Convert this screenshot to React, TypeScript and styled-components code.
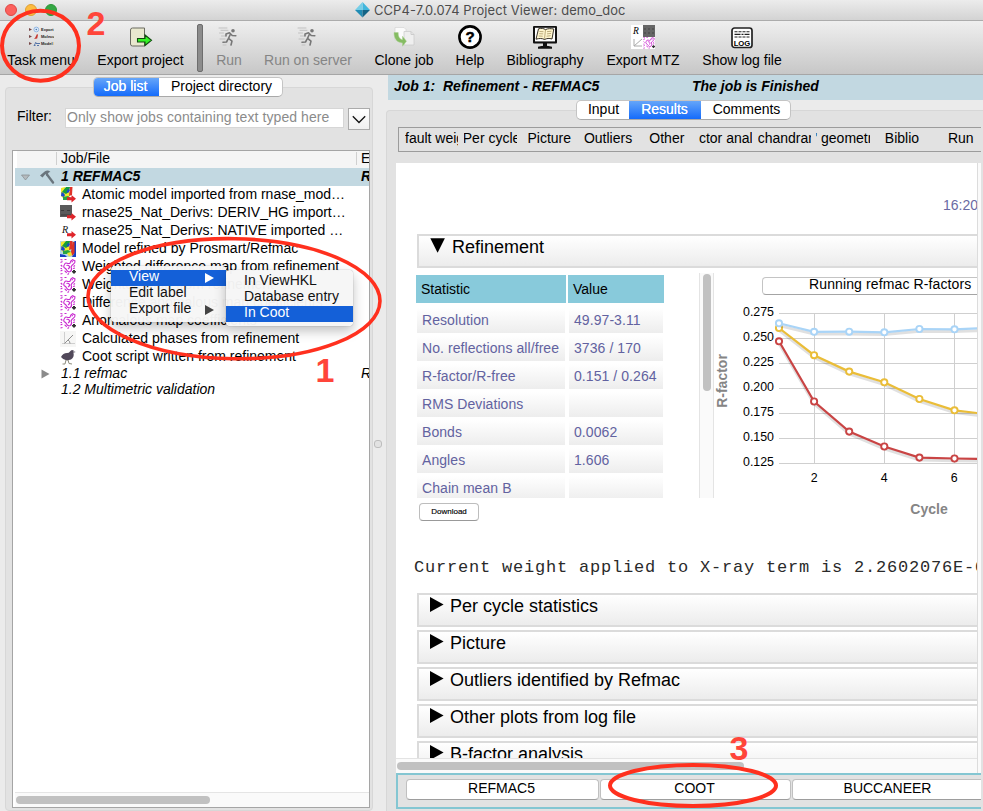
import React from "react";
import styled, { createGlobalStyle, css } from "styled-components";

const Global = createGlobalStyle`
  * { box-sizing: border-box; }
  html, body { margin: 0; padding: 0; overflow: hidden; }
  body { font-family: "Liberation Sans", Arial, sans-serif; font-size: 14px; color: #000; }
`;

const Window = styled.div`
  position: relative;
  width: 983px;
  height: 811px;
  overflow: hidden;
  display: flex;
  flex-direction: column;
  background: #ebebeb;
  white-space: nowrap;
`;

/* ---------- title bar and toolbar ---------- */

const TitleBar = styled.div`
  height: 21px;
  flex: none;
  display: flex;
  align-items: center;
  background: linear-gradient(#ececec, #d3d3d3);
  border-bottom: 1px solid #acacac;
  color: #4c4c4c;
`;

const Lights = styled.div`
  width: 355px;
  padding-left: 5px;
  display: flex;
  gap: 8px;
`;

const Light = styled.span<{ $color: string; $ring: string }>`
  width: 12px;
  height: 12px;
  border-radius: 50%;
  background: ${(p) => p.$color};
  border: 1px solid ${(p) => p.$ring};
`;

const Title = styled.span`
  font-family: "Inter", "Liberation Sans", sans-serif;
  font-size: 12.9px;
  letter-spacing: 0.13px;
  margin-left: 4px;
`;

const Toolbar = styled.div`
  height: 54px;
  flex: none;
  display: flex;
  gap: 22px;
  padding: 4px 0 0 7px;
  background: linear-gradient(#efefef, #c7c7c7);
  border-bottom: 1px solid #a6a6a6;
`;

const Tool = styled.div<{ $w: number; $off?: boolean }>`
  width: ${(p) => p.$w}px;
  display: flex;
  flex-direction: column;
  align-items: center;
  color: ${(p) => (p.$off ? "#858585" : "#000")};
  svg { flex: none; display: block; }
`;

const ToolLabel = styled.span`
  line-height: 16px;
  margin-top: 3px;
`;

const ToolDivider = styled.div`
  width: 6px;
  height: 48px;
  margin: -1px -9px 0;
  border-radius: 2px;
  background: #8c8c8c;
  border: 1px solid #6d6d6d;
`;

/* ---------- shared controls ---------- */

const Segments = styled.div<{ $left: number }>`
  position: relative;
  z-index: 1;
  height: 20px;
  width: max-content;
  margin-left: ${(p) => p.$left}px;
  display: flex;
  border-radius: 5px;
  overflow: hidden;
  background: #fff;
  border: 1px solid #c4c4c4;
  border-bottom-color: #a9a9a9;
`;

const Segment = styled.div<{ $w: number; $on?: boolean; $nudge?: number }>`
  width: ${(p) => p.$w}px;
  margin: -1px 0;
  line-height: 19px;
  text-align: center;
  padding-left: ${(p) => (p.$nudge ?? 0) * 2}px;
  ${(p) => p.$on && css`
    margin-left: -1px;
    padding-right: 1px;
    color: #fff;
    background: linear-gradient(#6aa9f9, #1068fb);
    text-shadow: 0 0 0.5px #fff;
  `}
`;

const Thumb = styled.div<{ $w: number; $h: number }>`
  width: ${(p) => p.$w}px;
  height: ${(p) => p.$h}px;
  border-radius: 4px;
  background: #c1c1c1;
`;

/* ---------- left side ---------- */

const Main = styled.div`
  flex: 1;
  min-height: 0;
  display: flex;
`;

const LeftSide = styled.div`
  width: 373px;
  flex: none;
  padding: 2px 0 0 5px;
`;

const LeftGroup = styled.div`
  margin-top: -10px;
  height: 724px;
  padding: 20px 2px 0 6px;
  background: #e2e2e2;
  border: 1px solid #d7d7d7;
  border-radius: 4px;
`;

const FilterRow = styled.div`
  height: 22px;
  display: flex;
  padding-left: 5px;
`;

const FilterLabel = styled.span`
  width: 48px;
  line-height: 17px;
`;

const FilterInput = styled.div`
  width: 279px;
  height: 20px;
  line-height: 17px;
  padding-left: 1px;
  background: #fff;
  border: 1px solid #d6d6d6;
  color: #8b8b8b;
  overflow: hidden;
  letter-spacing: 0.08px;
`;

const DropButton = styled.div`
  width: 22px;
  height: 22px;
  margin-left: 4px;
  background: linear-gradient(#fff, #f0f0f0);
  border: 1px solid #ababab;
  display: flex;
  align-items: center;
  justify-content: center;
`;

const Tree = styled.div`
  margin-top: 20px;
  width: 358px;
  height: 658px;
  border: 1px solid #a5a5a5;
  background: #fff;
  padding-left: 2px;
  display: flex;
  flex-direction: column;
  overflow: hidden;
`;

const TreeHead = styled.div`
  height: 17px;
  margin-left: 2px;
  flex: none;
  display: flex;
  background: #f5f5f5;
  line-height: 15px;
`;

const HeadCell = styled.div<{ $w: number }>`
  width: ${(p) => p.$w}px;
  padding-left: 4px;
  height: 13px;
  margin-top: 1px;
  line-height: 13px;
  border-right: 1px solid #d0d0d0;
  flex: none;
`;

const TreeRow = styled.div<{ $indent: number; $h?: number; $selected?: boolean; $italic?: boolean }>`
  height: ${(p) => p.$h ?? 18}px;
  line-height: ${(p) => (p.$h ?? 18) - 2}px;
  flex: none;
  display: flex;
  align-items: center;
  padding-left: ${(p) => p.$indent}px;
  font-style: ${(p) => (p.$italic || p.$selected ? "italic" : "normal")};
  font-weight: ${(p) => (p.$selected ? "bold" : "normal")};
  background: ${(p) => (p.$selected ? "#c2d8e1" : "#fff")};
`;

const RowIcon = styled.span<{ $w: number }>`
  width: ${(p) => p.$w}px;
  flex: none;
  display: flex;
  align-items: center;
`;

const RowText = styled.span<{ $w?: number }>`
  margin-top: -2px;
  ${(p) => p.$w && css`width: ${p.$w}px; flex: none;`}
`;

const TreeScroll = styled.div`
  margin-top: auto;
  height: 15px;
  flex: none;
  padding: 3px 0 0 1px;
  background: #fafafa;
  border-top: 1px solid #e5e5e5;
`;

const Splitter = styled.div`
  width: 13px;
  flex: none;
  display: flex;
  align-items: center;
  padding: 2px 0 0 1px;
`;

const Grip = styled.span`
  width: 8px;
  height: 8px;
  border: 1px solid #bdbdbd;
  border-radius: 3px;
  background: #e2e2e2;
`;

/* ---------- right side ---------- */

const RightSide = styled.div`
  flex: 1;
  min-width: 0;
  display: flex;
  flex-direction: column;
`;

const JobBar = styled.div`
  height: 25px;
  flex: none;
  margin-left: 2px;
  padding-left: 6px;
  display: flex;
  background: #c2d8e1;
  font-weight: bold;
  font-style: italic;
  line-height: 23px;
  white-space: pre;
`;

const JobTitle = styled.span`
  width: 298px;
`;

const RightGroup = styled.div`
  flex: 1;
  min-height: 0;
  margin-top: -10px;
  padding: 16px 0 0 9px;
  background: #e2e2e2;
  border: 1px solid #d7d7d7;
  border-width: 1px 0 0 1px;
  border-radius: 4px 0 0 0;
`;

const LinkBar = styled.div`
  height: 25px;
  margin-left: 2px;
  padding-left: 6px;
  display: flex;
  gap: 5.4px;
  border: 1px solid #9c9c9c;
  border-right: 0;
  width: 583px;
  overflow: hidden;
`;

const Link = styled.span<{ $left?: boolean; $shift?: number }>`
  width: 53.4px;
  flex: none;
  overflow: hidden;
  line-height: 21px;
  text-indent: ${(p) => p.$shift ?? 0}px;
  text-align: ${(p) => (p.$left ? "left" : "center")};
`;

const Report = styled.div`
  margin-top: 11px;
  height: 610px;
  width: 585px;
  display: grid;
  grid-template-columns: 581px 4px;
  grid-template-rows: 595px 15px;
  background: #fafafa;
`;

const Page = styled.div`
  background: #fff;
  overflow: hidden;
`;

const VTrack = styled.div`
  border-left: 1px solid #dcdcdc;
`;

const HTrack = styled.div`
  border-top: 1px solid #e3e3e3;
  padding: 3px 0 0 1px;
`;

const Clock = styled.div`
  height: 71px;
  padding: 33px 0 0 547px;
  line-height: 18px;
  color: #6a6aa2;
`;

const Fold = styled.div`
  height: 34px;
  margin: 0 0 3px 21px;
  width: 580px;
  display: flex;
  padding: 2px 0 0 11px;
  border: 2px solid #dbdbdb;
  background: linear-gradient(#fff, #ececec);
  font-size: 18px;
  line-height: 19px;
  svg { flex: none; }
`;

const FoldTitle = styled.span<{ $gap: number }>`
  margin-left: ${(p) => p.$gap}px;
`;

const Summary = styled.div`
  display: flex;
  height: 248px;
  margin-top: 5px;
`;

const StatColumn = styled.div`
  width: 303px;
  flex: none;
`;

const StatClip = styled.div`
  height: 225px;
  padding: 2px 0 0 20px;
  overflow: hidden;
`;

const StatRow = styled.div<{ $head?: boolean }>`
  display: grid;
  grid-template-columns: ${(p) => (p.$head ? "150px 96px" : "148px 94px")};
  column-gap: ${(p) => (p.$head ? 2 : 4)}px;
  margin-left: ${(p) => (p.$head ? 0 : 1)}px;
  margin-bottom: ${(p) => (p.$head ? 5 : 3)}px;
`;

const HeadStat = styled.div`
  height: 28px;
  padding-left: 5px;
  line-height: 28px;
  background: #88cadb;
`;

const Stat = styled.div`
  height: 25px;
  padding-left: 5px;
  line-height: 25px;
  letter-spacing: 0.07px;
  color: #6262a0;
  background: linear-gradient(#fff, #ededed);
`;

const Download = styled.div`
  width: 60px;
  height: 18px;
  margin: 5px 0 0 23px;
  border: 1px solid #bdbdbd;
  border-bottom-color: #999;
  border-radius: 4px;
  font-size: 8px;
  line-height: 15px;
  text-align: center;
  -webkit-text-stroke: 0.15px #000;
`;

const InnerTrack = styled.div`
  width: 15px;
  height: 225px;
  flex: none;
  padding: 1px 0 0 3px;
  background: #fafafa;
  border-left: 1px solid #e4e4e4;
  border-right: 1px solid #e4e4e4;
`;

const ChartColumn = styled.div`
  width: 263px;
  overflow: hidden;
`;

const PlotPicker = styled.div`
  margin: 4px 0 0 48px;
  width: 256px;
  height: 18px;
  line-height: 13px;
  padding-left: 46px;
  letter-spacing: 0.12px;
  border: 1px solid #c4c4c4;
  border-bottom-color: #a4a4a4;
  border-radius: 4px;
`;

const WeightLine = styled.div`
  height: 72px;
  padding: 35px 0 0 18px;
  font-family: "Liberation Mono", monospace;
  font-size: 17px;
  letter-spacing: 0.8px;
  line-height: 24px;
  color: #2a2a2a;
`;

const NextTasks = styled.div`
  height: 36px;
  width: 585px;
  display: flex;
  gap: 1px;
  padding: 4px 0 0 8px;
  border: 2px solid #84c6d2;
  border-right: 0;
  overflow: hidden;
`;

const TaskButton = styled.div<{ $w: number }>`
  width: ${(p) => p.$w}px;
  flex: none;
  height: 21px;
  line-height: 17px;
  padding-right: 2px;
  text-align: center;
  background: #fff;
  border: 1px solid #c0c0c0;
  border-bottom-color: #9d9d9d;
  border-radius: 4px;
`;

/* ---------- floating menus and marks ---------- */

const Menu = styled.div<{ $x: number; $y: number; $w: number; $h: number }>`
  position: absolute;
  left: ${(p) => p.$x}px;
  top: ${(p) => p.$y}px;
  width: ${(p) => p.$w}px;
  height: ${(p) => p.$h}px;
  background: rgba(246, 246, 246, 0.97);
  border-radius: 4px;
  box-shadow: 0 5px 12px rgba(0, 0, 0, 0.25), 0 0 1px rgba(0, 0, 0, 0.5);
  padding-top: 4px;
`;

const MenuItem = styled.div<{ $on?: boolean }>`
  height: 16px;
  line-height: 13px;
  padding: 0 12px 0 18px;
  display: flex;
  justify-content: space-between;
  align-items: center;
  color: ${(p) => (p.$on ? "#fff" : "#111")};
  background: ${(p) => (p.$on ? "#1460d8" : "transparent")};
`;

const MenuText = styled.span`
  margin-top: -3px;
`;

const Marks = styled.svg`
  position: absolute;
  left: 0;
  top: 0;
  pointer-events: none;
`;

/* ---------- icons ---------- */

const TaskIcon = () => (
  <svg width="26" height="24">
    {[4.5, 11.5, 18.5].map((y, i) => (
      <g key={y}>
        <path d={`M1 ${y - 1.5}l3 1.5-3 1.5z`} fill="#774848" />
        <text x="13" y={y + 1.5} fontSize="4" fontWeight="bold" fill="#222">{["Export", "Molecu", "Model I"][i]}</text>
      </g>
    ))}
    <circle cx="8.3" cy="4.5" r="2.4" fill="#dceafa" stroke="#7fa9dc" strokeWidth=".8" />
    <circle cx="8.3" cy="4.5" r=".8" fill="#47a" />
    <path d="M6 14l1-1 2-4 1 .8-.8 3.7z" fill="#c5352c" />
    <path d="M6 21l2-4M6 20.5h1.5M8 18.5h4M9 20.5h2" stroke="#5574a8" fill="none" />
  </svg>
);

const ExportIcon = () => (
  <svg width="26" height="24">
    <path d="M4.5 3h12v18h-12a2 2 0 0 1-2-2V5a2 2 0 0 1 2-2z" fill="#e9e8ce" stroke="#6b6b61" />
    <path d="M9.5 13.5H17V10l6.5 5.3L17 20.5V17H9.5z" fill="#35f326" stroke="#124b10" strokeWidth="1.1" />
  </svg>
);

const RunIcon = () => (
  <svg width="24" height="24" fill="none" stroke="#777" strokeLinecap="round" strokeLinejoin="round">
    <path d="M2 3h8M4 5.3h7M2.5 8h4M4.5 11h4M3 14h5M6 20h3" stroke="#c1c1c1" strokeWidth="1" />
    <circle cx="16" cy="5.8" r="1.8" fill="#777" stroke="none" />
    <path d="M9 11V9l3.5-1.2L15.2 10.5l3.6.3M13.5 9l-2 4.3 3.5 2.8-1 3.9M11 14.2L9.5 17 6 17.3" strokeWidth="1.6" />
  </svg>
);

const CloneIcon = () => (
  <svg width="24" height="24">
    <path d="M3 2.5h9l2 2v11H3z" fill="#fbfbfb" stroke="#d4d4d4" strokeWidth=".7" />
    <path d="M12 6.5h7l3 3V20h-10z" fill="#efefef" stroke="#c8c8c8" strokeWidth=".7" />
    <path d="M19 6.5v3h3" fill="none" stroke="#ccc" />
    <path d="M2 7.5h4.2c0 5 1.8 6.8 4.3 7.2v-3.5l4 5-4 5v-3.3C5 17.5 2 14 2 7.5z" fill="#85bc62" stroke="#aacf94" strokeWidth=".5" />
  </svg>
);

const HelpIcon = () => (
  <svg width="26" height="24">
    <circle cx="13" cy="12" r="10.6" fill="#fff" stroke="#000" strokeWidth="2.6" />
    <text x="13" y="17.4" textAnchor="middle" fontSize="15" fontWeight="bold" stroke="#000" strokeWidth=".5">?</text>
  </svg>
);

const BookIcon = () => (
  <svg width="26" height="24">
    <rect x="1" y="1" width="24" height="17.5" rx="1" fill="#111" />
    <rect x="3" y="2.8" width="20" height="13.6" fill="#fff" />
    <path d="M11 18h4v4h-4z" fill="#111" />
    <path d="M6 21.7q7-2 14 0v2H6z" fill="#111" />
    <path d="M6.5 3.8c3-.8 5-.4 7 .8 2.8-1.4 5.5-1 8.3-.6L20 14c-3-.9-5-.7-7.5.5C10 13.200 7.500 13.200 4 14.200z" fill="#fff6cf" stroke="#211b12" strokeWidth=".9" />
    <path d="M13.500 4.800l-1 9M7.500 6.500l4 .2M7.200 8.700l4 .2M6.700 11l4 .2M15 6.700l4.500-.5M15 8.900l4-.5M14.600 11.200l4-.5" stroke="#917b43" strokeWidth=".6" />
  </svg>
);

const Squiggles = ({ size = 16 }: { size?: number }) => (
  <svg width={size} height={size} viewBox="0 0 16 16">
    <g fill="none" stroke="#c92bd0" strokeWidth="1.1">
      <path d="M.5 .5l2 .5M.5 3.500l2-1M.8 6l1.500 1.500M.5 9.500h1.500M.6 12l1.800-1M.5 15l2-.5M4.500 .5h2" />
      <path d="M4.500 5.500q.5-2 2.500-1.300t3 0q.3-2.500 2.500-3.500l2.500 1.200q.3 2-1.500 3t-2.500 3.100q1.500 2.500-.5 4.500-2.500 1-3.500-1T4 8.500q-.8-1.500.5-3z" />
      <path d="M6.500 6.500q2-.8 2.800.8T8 10M11.500 3l1.500-.5M13.500 7.500l1.500-1M4.500 12q1.500 0 2 2M13 9.500l2-.5M9 14.500l-1.500 1" />
    </g>
    <path d="M12 12h1v-1h2v1h1v1l-2 2-2-2z" fill="#333" />
  </svg>
);

const Arrow = () => <path d="M7 10.2h4.500V8l4.500 3.700-4.500 3.800v-2.200H7z" fill="#df252a" />;

const ModelIcon = ({ arrow }: { arrow?: boolean }) => (
  <svg width="16" height="16">
    {!arrow && <rect width="16" height="16" fill="#b6d5e2" />}
    <path d="M1 1l4-1 2 4 3 2-1 5-5 1-3-3z" fill="#f0e62c" />
    <path d="M6 0h4l-1 5-3 2-4-2z" fill="#149d3b" />
    <path d="M10 0h2.500l-.5 8-3 1z" fill="#df3328" />
    <path d="M1.500 5l2 1 1.500 2-1 2-3-1zM8 2l2 1-2 3-1.500-1z" fill="#1947cf" />
    <path d="M3 10l5-1 3 2-3 2H3z" fill="#28a344" />
    {arrow ? <Arrow /> : (
      <>
        <path d="M12.500 1H15v11l-3 3-1-4z" fill="#dd3526" />
        <path d="M14.500 0H16v16h-4l2.500-4zM0 13l5 1 2 2H0z" fill="#173fc4" />
        <path d="M7 12l4-1 1 3-3 1.500z" fill="#f0e62c" />
      </>
    )}
  </svg>
);

const ReflIcon = ({ dark }: { dark?: boolean }) => (
  <svg width="16" height="16">
    {dark && <rect width="12" height="12" fill="#5a5a5a" />}
    {dark && <path d="M1 5.500h3M7 5.500h3M1 10h10" stroke="#3a3a3a" />}
    {!dark && <text x="2" y="9.500" fontFamily="Liberation Serif" fontStyle="italic" fontSize="10" fill="#111">R</text>}
    <Arrow />
  </svg>
);

const PhaseIcon = () => (
  <svg width="16" height="16" fill="none">
    <rect width="16" height="16" fill="#f6f6f5" />
    <path d="M4.500 1v11M2 12.500h13" stroke="#cfcfcf" />
    <path d="M4.500 12.500L13 4M8 9q2 1 2 3.500" stroke="#828282" strokeWidth=".9" />
  </svg>
);

const CootIcon = () => (
  <svg width="16" height="16">
    <path d="M1 8q2-4 6-4 2 0 3-1.500Q11.500 0 13.500 1.500L15.500 3l-2 1q1 4-2.500 6.500l-4 1Q3 11 1 8z" fill="#51495a" />
    <path d="M8 11l1 3.500 3 .5M6 11l-1 4H2.500" stroke="#8b8b7c" fill="none" />
    <path d="M13.500 2l2.300 1-2.300.7z" fill="#e5e5e5" />
  </svg>
);

const MtzIcon = () => (
  <svg width="26" height="24">
    <rect x="1" width="12" height="12" fill="#fff" />
    <text x="3" y="9.300" fontFamily="Liberation Serif" fontStyle="italic" fontSize="9.500">R</text>
    <rect x="13" width="12" height="12" fill="#666" />
    <path d="M14 4h10M14 8h10" stroke="#444" strokeDasharray="2 2" />
    <rect x="1" y="12" width="24" height="12" fill="#fff" />
    <path d="M4 14v7h8M4 21l8-7" stroke="#aaa" fill="none" />
    <g transform="translate(13 12)"><Squiggles size={12} /></g>
  </svg>
);

const LogIcon = () => (
  <svg width="24" height="24">
    <rect x="2" y="3" width="20" height="19.500" rx="2.500" fill="#fff" stroke="#222" strokeWidth="1.700" />
    <path d="M4.500 6.800h15M4.500 12h15" stroke="#222" strokeDasharray="3 1" strokeWidth="1.100" />
    <path d="M4.500 9.400h15" stroke="#222" strokeDasharray="6 1 2 1" strokeWidth="1.100" />
    <text x="12" y="21" fontSize="7.700" fontWeight="bold" textAnchor="middle">LOG</text>
  </svg>
);

const Hammer = () => (
  <svg width="16" height="16">
    <path d="M7 5.500L13 13.500" stroke="#6a757d" strokeWidth="2.400" strokeLinecap="round" />
    <path d="M0 6.500L5 2.200Q8 .5 10.500 3L9 3.200 7 6 5.500 5 2.500 8.500z" fill="#6a757d" />
  </svg>
);

const Triangle = ({ down }: { down?: boolean }) => (
  <svg width="15" height="16">
    <path d={down ? "M.3.3h14.600L7.600 14.800z" : "M0 0l13.600 7.500L0 15z"} fill="#000" />
  </svg>
);

/* ---------- data ---------- */

const files: [React.ReactNode, string][] = [
  [<ModelIcon arrow />, "Atomic model imported from rnase_mod…"],
  [<ReflIcon dark />, "rnase25_Nat_Derivs: DERIV_HG import…"],
  [<ReflIcon />, "rnase25_Nat_Derivs: NATIVE imported …"],
  [<ModelIcon />, "Model refined by Prosmart/Refmac"],
  [<Squiggles />, "Weighted difference map from refinement"],
  [<Squiggles />, "Weighted map from refinement"],
  [<Squiggles />, "Difference anomalous map coefficients"],
  [<Squiggles />, "Anomalous map coefficients"],
  [<PhaseIcon />, "Calculated phases from refinement"],
  [<CootIcon />, "Coot script written from refinement"],
];

const stats = [
  ["Resolution", "49.97-3.11"],
  ["No. reflections all/free", "3736 / 170"],
  ["R-factor/R-free", "0.151 / 0.264"],
  ["RMS Deviations", ""],
  ["Bonds", "0.0062"],
  ["Angles", "1.606"],
  ["Chain mean B", ""],
];

const series = [
  { color: "#c94444", ys: [46.3, 106.5, 136.6, 151.5, 162.6, 163.5, 164] },
  { color: "#eabd38", ys: [33, 60.2, 76.6, 87.3, 104, 115.3, 119.5] },
  { color: "#a9d4f7", ys: [28.3, 36.8, 36.7, 37.3, 34, 34.3, 32.8] },
];

const px = (i: number) => 65 + i * 35.1;

const Plot = styled.svg`
  display: block;
`;

/* Plot of the R-factors per refinement cycle */
const Chart = () => (
  <Plot width="263" height="226">
    {["0.275", "0.250", "0.225", "0.200", "0.175", "0.150", "0.125"].map((v, i) => (
      <g key={v}>
        <path d={`M65 ${18.5 + i * 25}H263`} stroke="#cfcfcf" />
        <text x="60" y={21 + i * 25} fontSize="12.4" textAnchor="end">{v}</text>
      </g>
    ))}
    {[2, 4, 6].map((v, i) => (
      <g key={v}>
        <path d={`M${100.5 + i * 70} 18V168`} stroke="#cfcfcf" />
        <text x={100.3 + i * 70} y="187" fontSize="12.4" textAnchor="middle">{v}</text>
      </g>
    ))}
    {series.map((s) => (
      <g key={s.color} fill="none">
        <polyline points={s.ys.map((y, i) => `${px(i)},${y + 2.3}`).join(" ")} stroke="#000" strokeOpacity=".12" strokeWidth="3" />
        <polyline points={s.ys.map((y, i) => `${px(i)},${y}`).join(" ")} stroke={s.color} strokeWidth="2.2" />
        {s.ys.map((y, i) => (
          <circle key={i} cx={px(i)} cy={y} r="3.1" fill="#fff" stroke={s.color} strokeWidth="1.9" />
        ))}
      </g>
    ))}
    <text x="215" y="219" textAnchor="middle" fontSize="14" fontWeight="bold" fill="#858585">Cycle</text>
    <text transform="translate(13 86) rotate(-90)" textAnchor="middle" fontSize="14" fontWeight="bold" fill="#858585">R-factor</text>
  </Plot>
);

export default function App() {
  return (
    <Window>
      <Global />
      <TitleBar>
        <Lights>
          <Light $color="#fc615d" $ring="#df4744" />
          <Light $color="#fdbc40" $ring="#de9f34" />
          <Light $color="#34a744" $ring="#2b9638" />
        </Lights>
        <svg width="15" height="16">
          <path d="M7.5 0L15 8H7.5z" fill="#41b6dc" />
          <path d="M7.5 0L0 8h7.5z" fill="#76cee7" />
          <path d="M0 8l7.5 7.5V8z" fill="#208cb4" />
          <path d="M15 8l-7.5 7.5V8z" fill="#146485" />
        </svg>
        <Title>CCP4-7.0.074 Project Viewer: demo_doc</Title>
      </TitleBar>

      <Toolbar>
        <Tool $w={68}><TaskIcon /><ToolLabel>Task menu</ToolLabel></Tool>
        <Tool $w={87}><ExportIcon /><ToolLabel>Export project</ToolLabel></Tool>
        <ToolDivider />
        <Tool $w={26} $off><RunIcon /><ToolLabel>Run</ToolLabel></Tool>
        <Tool $w={88} $off><RunIcon /><ToolLabel>Run on server</ToolLabel></Tool>
        <Tool $w={60}><CloneIcon /><ToolLabel>Clone job</ToolLabel></Tool>
        <Tool $w={28}><HelpIcon /><ToolLabel>Help</ToolLabel></Tool>
        <Tool $w={78}><BookIcon /><ToolLabel>Bibliography</ToolLabel></Tool>
        <Tool $w={74}><MtzIcon /><ToolLabel>Export MTZ</ToolLabel></Tool>
        <Tool $w={80}><LogIcon /><ToolLabel>Show log file</ToolLabel></Tool>
      </Toolbar>

      <Main>
        <LeftSide>
          <Segments $left={88}>
            <Segment $w={66} $on>Job list</Segment>
            <Segment $w={123} $nudge={1}>Project directory</Segment>
          </Segments>
          <LeftGroup>
            <FilterRow>
              <FilterLabel>Filter:</FilterLabel>
              <FilterInput>Only show jobs containing text typed here</FilterInput>
              <DropButton>
                <svg width="14" height="9" fill="none" stroke="#111" strokeWidth="1.3"><path d="M.8 1.2L7 7.5l6.2-6.3" /></svg>
              </DropButton>
            </FilterRow>
            <Tree>
              <TreeHead>
                <HeadCell $w={40} />
                <HeadCell $w={300}>Job/File</HeadCell>
                <HeadCell $w={30}>E</HeadCell>
              </TreeHead>
              <TreeRow $indent={6} $selected>
                <RowIcon $w={19}>
                  <svg width="9" height="7"><path d="M.5 1h8L4.5 6z" fill="#b4babd" stroke="#858b8e" strokeWidth=".7" /></svg>
                </RowIcon>
                <RowIcon $w={21}><Hammer /></RowIcon>
                <RowText $w={300}>1 REFMAC5</RowText>
                <RowText>R</RowText>
              </TreeRow>
              {files.map(([icon, label]) => (
                <TreeRow key={label} $indent={45}>
                  <RowIcon $w={22}>{icon}</RowIcon>
                  <RowText>{label}</RowText>
                </TreeRow>
              ))}
              <TreeRow $indent={26} $h={16} $italic>
                <RowIcon $w={20}>
                  <svg width="9" height="10"><path d="M.5.5l8 4.5-8 4.5z" fill="#8b8b8b" /></svg>
                </RowIcon>
                <RowText $w={300}>1.1 refmac</RowText>
                <RowText>R</RowText>
              </TreeRow>
              <TreeRow $indent={46} $h={16} $italic><RowText>1.2 Multimetric validation</RowText></TreeRow>
              <TreeScroll><Thumb $w={194} $h={8} /></TreeScroll>
            </Tree>
          </LeftGroup>
        </LeftSide>
        <Splitter><Grip /></Splitter>

        <RightSide>
          <JobBar><JobTitle>Job 1:  Refinement - REFMAC5</JobTitle><span>The job is Finished</span></JobBar>
          <Segments $left={190}>
            <Segment $w={53}>Input</Segment>
            <Segment $w={72} $on>Results</Segment>
            <Segment $w={89} $nudge={1}>Comments</Segment>
          </Segments>
          <RightGroup>
            <LinkBar>
              <Link $left>fault weights</Link>
              <Link $left $shift={-1}>Per cycle</Link>
              <Link>Picture</Link>
              <Link>Outliers</Link>
              <Link>Other</Link>
              <Link $left>ctor anal</Link>
              <Link $left>chandran</Link>
              <Link $left $shift={-2}>' geometry</Link>
              <Link>Biblio</Link>
              <Link>Run</Link>
            </LinkBar>
            <Report>
              <Page>
                <Clock>16:20</Clock>
                <Fold><Triangle down /><FoldTitle $gap={7}>Refinement</FoldTitle></Fold>
                <Summary>
                  <StatColumn>
                    <StatClip>
                      <StatRow $head><HeadStat>Statistic</HeadStat><HeadStat>Value</HeadStat></StatRow>
                      {stats.map(([name, value]) => (
                        <StatRow key={name}><Stat>{name}</Stat><Stat>{value}</Stat></StatRow>
                      ))}
                    </StatClip>
                    <Download>Download</Download>
                  </StatColumn>
                  <InnerTrack><Thumb $w={8} $h={117} /></InnerTrack>
                  <ChartColumn>
                    <PlotPicker>Running refmac R-factors</PlotPicker>
                    <Chart />
                  </ChartColumn>
                </Summary>
                <WeightLine>Current weight applied to X-ray term is 2.2602076E-01</WeightLine>
                {["Per cycle statistics", "Picture", "Outliers identified by Refmac", "Other plots from log file", "B-factor analysis"].map((t) => (
                  <Fold key={t}><Triangle /><FoldTitle $gap={5}>{t}</FoldTitle></Fold>
                ))}
              </Page>
              <VTrack />
              <HTrack><Thumb $w={347} $h={8} /></HTrack>
              <VTrack />
            </Report>
            <NextTasks>
              <TaskButton $w={193}>REFMAC5</TaskButton>
              <TaskButton $w={191}>COOT</TaskButton>
              <TaskButton $w={193}>BUCCANEER</TaskButton>
            </NextTasks>
          </RightGroup>
        </RightSide>
      </Main>

      <Menu $x={111} $y={266} $w={115} $h={56}>
        <MenuItem $on><MenuText>View</MenuText><svg width="9" height="10"><path d="M0 0l9 5-9 5z" fill="#fff" /></svg></MenuItem>
        <MenuItem><MenuText>Edit label</MenuText></MenuItem>
        <MenuItem><MenuText>Export file</MenuText><svg width="9" height="10"><path d="M0 0l9 5-9 5z" fill="#444" /></svg></MenuItem>
      </Menu>
      <Menu $x={226} $y={270} $w={127} $h={56}>
        <MenuItem><MenuText>In ViewHKL</MenuText></MenuItem>
        <MenuItem><MenuText>Database entry</MenuText></MenuItem>
        <MenuItem $on><MenuText>In Coot</MenuText></MenuItem>
      </Menu>

      <Marks width="983" height="811">
        <g fill="none" stroke="#ff301e" strokeWidth="4">
          <ellipse cx="40.5" cy="45.7" rx="38.500" ry="35" />
          <ellipse cx="234" cy="298.7" rx="146" ry="60" transform="rotate(1 234 298)" strokeWidth="3.600" />
          <ellipse cx="693" cy="785.5" rx="83" ry="20.500" />
        </g>
        <g fill="#ff453a" fontSize="34" fontWeight="bold">
          <text x="86.5" y="35">2</text>
          <text x="315.500" y="382">1</text>
          <text x="729.5" y="760">3</text>
        </g>
      </Marks>
    </Window>
  );
}
